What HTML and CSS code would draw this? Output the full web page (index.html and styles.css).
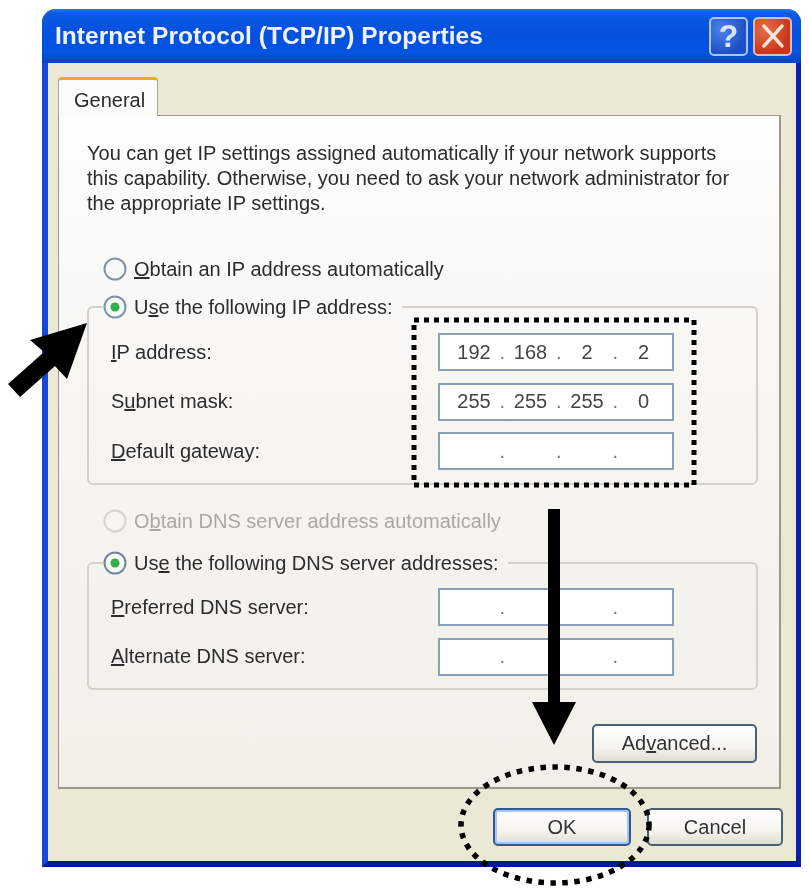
FILE: index.html
```html
<!DOCTYPE html>
<html lang="en">
<head>
<meta charset="utf-8">
<title>Internet Protocol (TCP/IP) Properties</title>
<link rel="stylesheet" href="styles.css">
</head>
<body>
<div class="stage">
  <div class="window">
    <header class="titlebar">
      <h1 class="title">Internet Protocol (TCP/IP) Properties</h1>
      <div class="controls">
        <span class="ctl help">?</span>
        <span class="ctl close"><svg viewBox="0 0 38 38" width="34" height="34"><path d="M9 8 L29 30 M29 8 L9 30" stroke="#fbe4d8" stroke-width="4" stroke-linecap="round"/></svg></span>
      </div>
    </header>
    <div class="client">
      <div class="tab">General</div>
      <main class="panel">
        <p class="intro">You can get IP settings assigned automatically if your network supports<br>this capability. Otherwise, you need to ask your network administrator for<br>the appropriate IP settings.</p>

        <div class="option first">
          <svg class="radio" viewBox="0 0 24 24"><circle cx="12" cy="12" r="10.5" fill="#f8f8f6" stroke="#7f95ab" stroke-width="2"/></svg>
          <span><u>O</u>btain an IP address automatically</span>
        </div>

        <fieldset class="group ipgroup">
          <legend class="option">
            <svg class="radio" viewBox="0 0 24 24"><circle cx="12" cy="12" r="10.5" fill="#f8f8f6" stroke="#7f95ab" stroke-width="2"/><circle cx="12" cy="12" r="4.5" fill="#2fae4c"/></svg>
            <span>U<u>s</u>e the following IP address:</span>
          </legend>
          <div class="field">
            <label><u>I</u>P address:</label>
            <div class="ip"><span>192</span><i>.</i><span>168</span><i>.</i><span>2</span><i>.</i><span>2</span></div>
          </div>
          <div class="field">
            <label>S<u>u</u>bnet mask:</label>
            <div class="ip"><span>255</span><i>.</i><span>255</span><i>.</i><span>255</span><i>.</i><span>0</span></div>
          </div>
          <div class="field">
            <label><u>D</u>efault gateway:</label>
            <div class="ip"><span></span><i>.</i><span></span><i>.</i><span></span><i>.</i><span></span></div>
          </div>
        </fieldset>

        <div class="option disabled">
          <svg class="radio" viewBox="0 0 24 24"><circle cx="12" cy="12" r="10.5" fill="#f6f5f0" stroke="#d6d6cf" stroke-width="2"/></svg>
          <span>O<u>b</u>tain DNS server address automatically</span>
        </div>

        <fieldset class="group dnsgroup">
          <legend class="option">
            <svg class="radio" viewBox="0 0 24 24"><circle cx="12" cy="12" r="10.5" fill="#f8f8f6" stroke="#6f86a0" stroke-width="2"/><circle cx="12" cy="12" r="4.5" fill="#2fae4c"/></svg>
            <span>Us<u>e</u> the following DNS server addresses:</span>
          </legend>
          <div class="field">
            <label><u>P</u>referred DNS server:</label>
            <div class="ip"><span></span><i>.</i><span></span><i>.</i><span></span><i>.</i><span></span></div>
          </div>
          <div class="field">
            <label><u>A</u>lternate DNS server:</label>
            <div class="ip"><span></span><i>.</i><span></span><i>.</i><span></span><i>.</i><span></span></div>
          </div>
        </fieldset>

        <div class="advanced-row">
          <button class="btn advanced" type="button">Ad<u>v</u>anced...</button>
        </div>
      </main>
      <footer class="actions">
        <button class="btn default" type="button">OK</button>
        <button class="btn" type="button">Cancel</button>
      </footer>
    </div>
  </div>

  <svg class="notes" viewBox="0 0 809 893" width="809" height="893" aria-hidden="true">
    <rect x="414" y="320" width="280" height="165" fill="none" stroke="#000" stroke-width="5" stroke-dasharray="5 5"/>
    <ellipse cx="555" cy="825" rx="94" ry="58" fill="none" stroke="#000" stroke-width="5.5" stroke-dasharray="5.5 6.5"/>
    <polygon points="8,384 44,352 30,340 87,323 67,379 55,366 20,397" fill="#000"/>
    <polygon points="548,509 560,509 560,702 576,702 554,745 532,702 548,702" fill="#000"/>
  </svg>
</div>
</body>
</html>
```
FILE: styles.css
```css
* { box-sizing: border-box; }
html, body { margin: 0; padding: 0; background: #fff; }
body {
  font-family: "Liberation Sans", Arial, sans-serif;
  font-size: 20px;
  color: #2c2c2c;
}
.stage {
  position: relative;
  width: 809px;
  height: 893px;
  overflow: hidden;
  padding: 9px 8px 0 42px;
  filter: blur(0.7px);
}
.window {
  display: flex;
  flex-direction: column;
  height: 858px;
  border-radius: 14px 14px 0 0;
  overflow: hidden;
  background: #1a46d8;
}
.titlebar {
  height: 54px;
  display: flex;
  align-items: center;
  justify-content: space-between;
  padding: 0 9px 0 13px;
  background: linear-gradient(180deg, #2a78f0 0, #0a5ae4 8%, #0350dc 45%, #0454e2 80%, #0342c0 100%);
}
.title {
  margin: 0;
  font-size: 24.5px;
  font-weight: bold;
  letter-spacing: 0.05px;
  color: #eef3ff;
  white-space: nowrap;
}
.controls { display: flex; gap: 5px; }
.ctl {
  width: 39px;
  height: 39px;
  display: flex;
  align-items: center;
  justify-content: center;
  border: 2px solid #a9c4f5;
  border-radius: 5px;
  font-size: 32px;
  font-weight: bold;
  color: #d8e4fb;
}
.help { background: radial-gradient(circle at 30% 30%, #4f82ea, #1d4fc8 70%); }
.close { background: radial-gradient(circle at 30% 30%, #e8704a, #c8361a 70%); border-color: #d9b9c9; }
.client {
  flex: 1;
  display: flex;
  flex-direction: column;
  background: #ebe8d6;
  border-left: 6px solid #1a46d8;
  border-right: 5px solid #0a1fb0;
  border-bottom: 6px solid #001a9c;
  padding: 14px 13px 15px 10px;
}
.tab {
  align-self: flex-start;
  width: 100px;
  height: 39px;
  margin-bottom: -1px;
  padding: 5px 0 0 15px;
  line-height: 30px;
  position: relative;
  z-index: 1;
  background: #fbfbf8;
  border: 1px solid #a8a99e;
  border-top: 3px solid #eda92f;
  border-bottom: 0;
  border-radius: 4px 4px 0 0;
}
.panel {
  height: 674px;
  margin-right: 2px;
  padding: 25px 22px 0 28px;
  border: 2px solid #98988f;
  border-width: 1px 2px 2px 1px;
  background: linear-gradient(180deg, #fdfdfb 0, #f7f6f1 40%, #f1efe8 100%);
}
.intro { margin: 0; line-height: 25px; white-space: nowrap; }
.option {
  display: flex;
  align-items: center;
  gap: 7px;
  height: 26px;
  padding: 0;
  white-space: nowrap;
}
.radio { width: 24px; height: 24px; flex: none; }
.option.first { margin: 40px 0 12px 16px; }
.option.disabled { margin: 23px 0 16px 16px; color: #a9a9a2; }
.group {
  margin: 0;
  padding: 0 82px 13px 22px;
  border: 2px solid #d2d2c8;
  border-radius: 6px;
  min-width: 0;
  width: 671px;
}
.group legend { margin-left: -8px; padding: 0 9px 0 0; }
.ipgroup { padding-top: 13px; }
.dnsgroup { padding-top: 12px; padding-bottom: 12px; }
.field {
  display: flex;
  align-items: center;
  justify-content: space-between;
  height: 38px;
}
.field + .field { margin-top: 11.5px; }
.ip {
  width: 236px;
  height: 38px;
  display: flex;
  align-items: center;
  padding-left: 9px;
  background: #fff;
  border: 2px solid #8aa0b8;
  color: #444;
}
.ip span { width: 50px; text-align: center; }
.ip i { width: 6.5px; font-style: normal; text-align: center; color: #777; }
.advanced-row { display: flex; justify-content: flex-end; margin-top: 34px; }
.btn {
  font: inherit;
  color: #333;
  height: 39px;
  width: 165px;
  padding: 0;
  border: 2px solid #4a6078;
  border-radius: 5px;
  background: linear-gradient(180deg, #ffffff 0, #f6f5ef 60%, #e0ded2 100%);
}
.actions {
  display: flex;
  justify-content: flex-end;
  gap: 16px;
  margin-top: 19px;
}
.actions .btn { width: 136px; height: 38px; }
.actions .default {
  width: 138px;
  border-color: #2f5a96;
  box-shadow: inset 0 0 0 2px #a6c4f0;
}
.notes { position: absolute; left: 0; top: 0; }
```
